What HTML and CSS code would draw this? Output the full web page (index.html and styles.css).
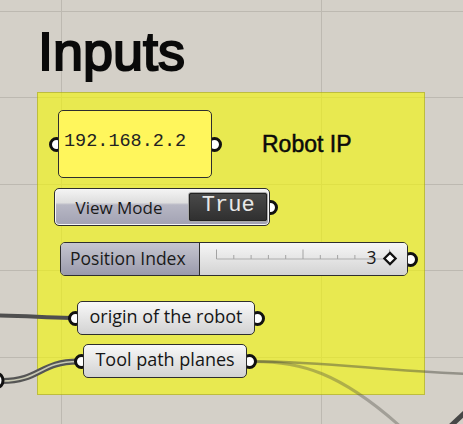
FILE: index.html
```html
<!DOCTYPE html>
<html lang="en">
<head>
<meta charset="utf-8">
<title>Inputs</title>
<link rel="stylesheet" href="styles.css">
</head>
<body>
<div class="canvas">
  <h1 class="title">Inputs</h1>
  <div class="group">
    <svg class="wires" width="463" height="424" viewBox="0 0 463 424">
      <path d="M-6 315.5 C 30 315.5 42 318 71 318" class="w-dark"/>
      <path d="M2 381 C 40 381 40 361.5 78 361.5" class="w-list-outer"/>
      <path d="M2 381 C 40 381 40 361.5 78 361.5" class="w-list-inner"/>
      <path d="M254 361.5 C 330 361.5 380 371 470 374" class="w-light"/>
      <path d="M254 361.5 C 300 361.5 340 372 402 428" class="w-light2"/>
      <path d="M440 436 L 474 404" class="w-corner"/>
      <ellipse cx="-3" cy="380.5" rx="6" ry="7" class="w-grip"/>
    </svg>

    <div class="row">
      <div class="panel node has-in has-out">192.168.2.2</div>
      <div class="scribble">Robot IP</div>
    </div>

    <div class="toggle node has-out">
      <span class="toggle-label">View Mode</span>
      <span class="toggle-btn">True</span>
    </div>

    <div class="slider node has-out">
      <span class="slider-label">Position Index</span>
      <div class="slider-rail">
        <svg class="ticks" width="206" height="31" viewBox="0 0 206 31">
          <line x1="16.5" y1="16" x2="189.5" y2="16" class="t-line"/>
          <line x1="16.5" y1="6.5" x2="16.5" y2="16" class="t-tick"/>
          <line x1="33.8" y1="12" x2="33.8" y2="16" class="t-tick"/>
          <line x1="51.1" y1="12" x2="51.1" y2="16" class="t-tick"/>
          <line x1="68.4" y1="12" x2="68.4" y2="16" class="t-tick"/>
          <line x1="85.7" y1="12" x2="85.7" y2="16" class="t-tick"/>
          <line x1="103" y1="6.5" x2="103" y2="16" class="t-tick"/>
          <line x1="120.3" y1="12" x2="120.3" y2="16" class="t-tick"/>
          <line x1="137.6" y1="12" x2="137.6" y2="16" class="t-tick"/>
          <line x1="154.9" y1="12" x2="154.9" y2="16" class="t-tick"/>
          <line x1="172.2" y1="12" x2="172.2" y2="16" class="t-tick"/>
          <line x1="189.5" y1="6.5" x2="189.5" y2="16" class="t-tick"/>
          <rect x="186" y="11.5" width="8" height="8" transform="rotate(45 190 15.5)" class="t-knob"/>
        </svg>
        <span class="slider-value">3</span>
      </div>
    </div>

    <div class="param node has-in has-out param-origin">origin of the robot</div>
    <div class="param node has-in has-out param-tool">Tool path planes</div>
  </div>
</div>
</body>
</html>
```
FILE: styles.css
```css
html, body {
  margin: 0;
  padding: 0;
  background: #d4d0c8;
}

.canvas {
  position: relative;
  width: 463px;
  height: 424px;
  overflow: hidden;
  background:
    linear-gradient(#bdb9b1, #bdb9b1) 0 11px / 100% 1px no-repeat,
    linear-gradient(#bdb9b1, #bdb9b1) 0 97px / 100% 1px no-repeat,
    linear-gradient(#bdb9b1, #bdb9b1) 0 184px / 100% 1px no-repeat,
    linear-gradient(#bdb9b1, #bdb9b1) 0 270px / 100% 1px no-repeat,
    linear-gradient(#bdb9b1, #bdb9b1) 0 357px / 100% 1px no-repeat,
    linear-gradient(#bdb9b1, #bdb9b1) 61px 0 / 1px 100% no-repeat,
    linear-gradient(#bdb9b1, #bdb9b1) 321px 0 / 1px 100% no-repeat,
    #d4d0c8;
}

.title {
  margin: 0;
  padding: 24px 0 0 38px;
  height: 54px;
  font-family: "Liberation Sans", Arial, sans-serif;
  font-weight: 400;
  font-size: 54px;
  line-height: 54px;
  color: #0a0a0a;
  -webkit-text-stroke: 2px #0a0a0a;
}

.group {
  position: relative;
  z-index: 0;
  box-sizing: border-box;
  width: 388px;
  height: 303px;
  margin: 14px 0 0 37px;
  padding-top: 17px;
  background: rgba(245, 250, 0, 0.6);
  border: 1px solid rgba(110, 110, 30, 0.35);
}

.wires {
  position: absolute;
  left: -38px;
  top: -93px;
  z-index: -1;
  overflow: visible;
}

.w-dark { fill: none; stroke: #4f4f4f; stroke-width: 4; }
.w-corner { fill: none; stroke: #474747; stroke-width: 5; }
.w-list-outer { fill: none; stroke: #555; stroke-width: 6; }
.w-list-inner { fill: none; stroke: #c9c9b4; stroke-width: 1.6; }
.w-light { fill: none; stroke: rgba(70, 70, 60, 0.45); stroke-width: 2.5; }
.w-light2 { fill: none; stroke: rgba(70, 70, 60, 0.35); stroke-width: 3; }
.w-grip { fill: #fff; stroke: #111; stroke-width: 3; }

/* generic node + grips */
.node {
  position: relative;
  box-sizing: border-box;
  border: 1.5px solid #2e2e2e;
  border-radius: 5px;
}

.has-in::before,
.has-out::after {
  content: "";
  position: absolute;
  z-index: -1;
  top: 50%;
  width: 9px;
  height: 9px;
  margin-top: -7.5px;
  border: 3px solid #111;
  border-radius: 50%;
  background: #fff;
}

.has-in::before { left: -10.5px; }
.has-out::after { right: -10.5px; }

.row {
  display: flex;
  align-items: flex-start;
}

.panel {
  width: 154px;
  height: 68px;
  margin-left: 20px;
  padding: 20px 0 0 5px;
  background: #fff65c;
  font-family: "Liberation Mono", "Courier New", monospace;
  font-size: 18.5px;
  line-height: 21px;
  color: #222;
}

.scribble {
  margin: 21px 0 0 50px;
  font-family: "Liberation Sans", Arial, sans-serif;
  font-weight: 400;
  font-size: 23px;
  line-height: 26px;
  color: #0a0a0a;
  -webkit-text-stroke: 0.5px #0a0a0a;
}

/* toggle */
.toggle {
  display: flex;
  align-items: center;
  width: 216px;
  height: 38px;
  margin: 10px 0 0 16px;
  background: linear-gradient(#f4f4f4 0%, #dedede 38%, #b7b7c4 44%, #a2a2b3 100%);
  box-shadow: inset 0 0 0 1px #f6f6f6;
}

.toggle.has-out::after { right: -8.5px; }

.toggle-label {
  padding-left: 20.5px;
  font-family: "Open Sans", sans-serif;
  font-size: 17px;
  line-height: 35px;
  color: #1a1a1a;
}

.toggle-btn {
  box-sizing: border-box;
  width: 80px;
  height: 30px;
  margin-left: auto;
  margin-right: 0.8px;
  border: 1px solid #a8a8a8;
  border-radius: 3px;
  outline: 1px solid #222;
  outline-offset: -2px;
  background: linear-gradient(#4a4a4a, #2f2f2f);
  font-family: "Liberation Mono", "Courier New", monospace;
  font-size: 22px;
  line-height: 25px;
  padding-bottom: 3px;
  text-align: center;
  color: #e8e8e8;
}

/* slider */
.slider {
  display: flex;
  width: 348px;
  height: 34px;
  margin: 16px 0 0 22px;
}

.slider-label {
  box-sizing: border-box;
  width: 139px;
  padding-left: 9px;
  border-right: 1.5px solid #2e2e2e;
  border-radius: 4px 0 0 4px;
  background: linear-gradient(#c6c6d0, #9a9aac);
  font-family: "Open Sans", sans-serif;
  font-size: 17.5px;
  line-height: 30px;
  color: #1a1a1a;
}

.slider-rail {
  position: relative;
  flex: 1;
  border-radius: 0 4px 4px 0;
  background: linear-gradient(#f6f6f6, #d3d3d3);
}

.ticks {
  display: block;
}

.t-line { stroke: #adadad; stroke-width: 1; }
.t-tick { stroke: #a3a3a3; stroke-width: 1; }
.t-knob { fill: #fff; stroke: #111; stroke-width: 2.2; }

.slider-value {
  position: absolute;
  right: 30.5px;
  top: 4px;
  font-family: "Open Sans", sans-serif;
  font-size: 17.5px;
  line-height: 20px;
  color: #1a1a1a;
}

/* parameters */
.param {
  height: 34px;
  background: linear-gradient(#f8f8f8, #d2d2d2);
  font-family: "Open Sans", sans-serif;
  font-size: 18px;
  line-height: 28px;
  padding-bottom: 3px;
  text-align: center;
  color: #161616;
}

.param-origin {
  width: 178px;
  margin: 25px 0 0 39px;
}

.param-tool {
  width: 164px;
  margin: 9px 0 0 45px;
}
```
